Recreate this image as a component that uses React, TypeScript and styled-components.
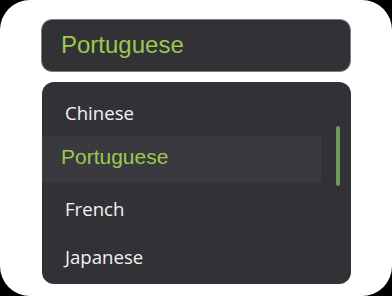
import styled, { createGlobalStyle } from 'styled-components';

const GlobalStyle = createGlobalStyle`
  html, body {
    margin: 0;
    padding: 0;
    background: #000;
  }
`;

const Card = styled.div`
  box-sizing: border-box;
  width: 392px;
  height: 296px;
  background: #ffffff;
  border-radius: 30px;
  padding: 19px 41px 0 41px;
  display: flex;
  flex-direction: column;
  gap: 10px;
`;

const SelectBox = styled.div`
  box-sizing: border-box;
  height: 53px;
  width: 310px;
  background: #323136;
  border: 1px solid #7d7c80;
  border-radius: 11px;
  display: flex;
  align-items: center;
  padding: 0 0 1px 19px;
  font-family: 'Liberation Sans', Arial, sans-serif;
  font-size: 24px;
  color: #9cc84d;
`;

const ListBox = styled.div`
  position: relative;
  box-sizing: border-box;
  height: 202px;
  width: 309px;
  margin-left: 1px;
  background: #323136;
  border-radius: 12px;
  overflow: hidden;
  padding-top: 6px;
`;

const Option = styled.div<{ $selected?: boolean }>`
  box-sizing: border-box;
  height: ${(p) => (p.$selected ? '46px' : '48px')};
  margin-bottom: ${(p) => (p.$selected ? '2px' : '0')};
  width: 279px;
  display: flex;
  align-items: center;
  padding-left: ${(p) => (p.$selected ? '19px' : '23px')};
  padding-bottom: ${(p) => (p.$selected ? '4px' : '0')};
  background: ${(p) => (p.$selected ? '#3a393f' : 'transparent')};
  color: ${(p) => (p.$selected ? '#9cc84d' : '#f2f2f2')};
  font-family: ${(p) =>
    p.$selected
      ? "'Liberation Sans', Arial, sans-serif"
      : "'Open Sans', 'Noto Sans', sans-serif"};
  font-size: ${(p) => (p.$selected ? '21px' : '18.6px')};
`;

const ScrollThumb = styled.div`
  position: absolute;
  left: 294px;
  top: 44px;
  width: 4px;
  height: 60px;
  border-radius: 2px;
  background: #6f9a5b;
`;

const options = ['Chinese', 'Portuguese', 'French', 'Japanese'];

export default function App() {
  const selected = 'Portuguese';
  return (
    <>
      <GlobalStyle />
      <Card>
        <SelectBox>{selected}</SelectBox>
        <ListBox>
          {options.map((o) => (
            <Option key={o} $selected={o === selected}>
              {o}
            </Option>
          ))}
          <ScrollThumb />
        </ListBox>
      </Card>
    </>
  );
}
